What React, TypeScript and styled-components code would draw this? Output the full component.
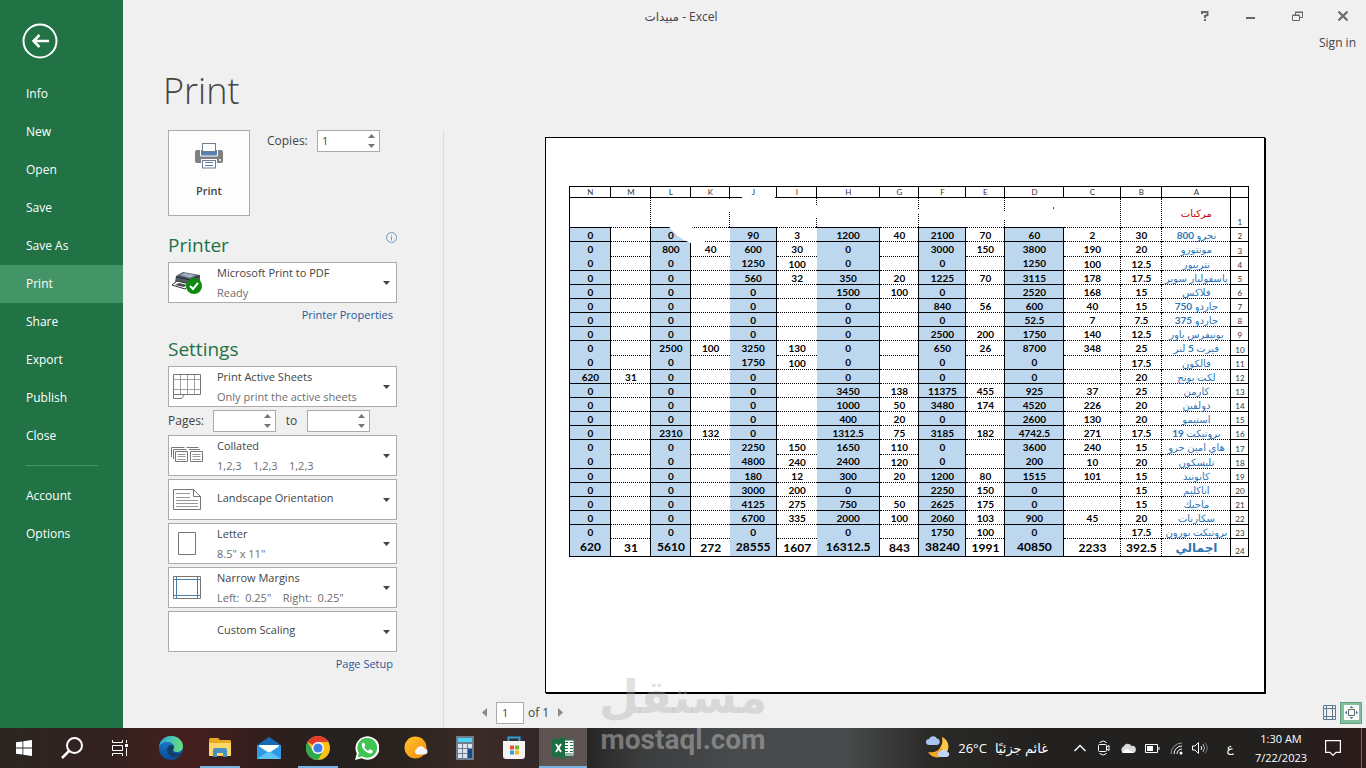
import React from "react";
import styled, { createGlobalStyle, css } from "styled-components";

const GlobalStyle = createGlobalStyle`
  *, *::before, *::after { box-sizing: border-box; }
  body {
    margin: 0;
    background: #f0f0f0;
    color: #444;
    font-family: "Open Sans", "DejaVu Sans", sans-serif;
    font-size: 11px;
    line-height: 16px;
  }
  button, input, select { font: inherit; color: inherit; margin: 0; }
  button { padding: 0; border: 0; background: none; }
  svg { display: block; }
`;

/* ---------- frame ---------- */

const Shell = styled.div`
  display: grid;
  grid-template-columns: 123px minmax(0, 1fr);
  grid-template-rows: 1fr 40px;
  min-height: 100vh;
  position: relative;
`;

const Sidebar = styled.nav`
  background: #217346;
  color: #fff;
  font-size: 12px;
  display: flex;
  flex-direction: column;
`;

const BackButton = styled.button`
  align-self: flex-start;
  margin: 23px 0 16px 22px;
`;

const NavItem = styled.a<{ $active?: boolean }>`
  display: flex;
  align-items: center;
  height: 38px;
  padding-left: 26px;
  color: #fff;
  text-decoration: none;
  background: ${(p) => (p.$active ? "#439467" : "transparent")};
`;

const NavRule = styled.hr`
  width: 72px;
  margin: 10px 26px 11px;
  border: 0;
  border-top: 1px solid #439467;
`;

const Main = styled.main`
  display: flex;
  flex-direction: column;
`;

const TitleBar = styled.header`
  display: flex;
  height: 32px;
  padding-left: 57px;
`;

const WindowTitle = styled.div`
  flex: 1;
  text-align: center;
  font-size: 12px;
  line-height: 34px;
`;

const WindowControls = styled.div`
  display: flex;
  width: 184px;
`;

const ControlButton = styled.button`
  flex: 1;
  display: grid;
  place-items: center;
`;

const SignIn = styled.a`
  align-self: flex-end;
  margin: 3px 10px 0 0;
  color: #444;
  font-size: 12px;
  text-decoration: none;
`;

const PageTitle = styled.h1`
  margin: 15px 0 15px 40px;
  font-size: 36px;
  line-height: 49px;
  font-weight: 300;
`;

const Backstage = styled.div`
  display: flex;
  flex: 1;
`;

/* ---------- settings column ---------- */

const Settings = styled.form`
  width: 321px;
  padding: 0 46px 0 45px;
  border-right: 1px solid #dcdcdc;
  display: flex;
  flex-direction: column;
`;

const TopRow = styled.div`
  display: flex;
  align-items: flex-start;
  margin-bottom: 3px;
`;

const PrintButton = styled.button`
  width: 82px;
  height: 86px;
  margin-right: 17px;
  border: 1px solid #ababab;
  background: #fdfdfd;
  display: flex;
  flex-direction: column;
  align-items: center;
  justify-content: space-between;
  padding: 12px 0 16px;
  font-weight: 600;
`;

const FieldLabel = styled.label<{ $width: number; $centered?: boolean }>`
  width: ${(p) => p.$width}px;
  font-size: 12px;
  line-height: 22px;
  text-align: ${(p) => (p.$centered ? "center" : "left")};
`;

const SpinBox = styled.span`
  display: flex;
  width: 63px;
  height: 22px;
  border: 1px solid #ababab;
  background: #fff;
`;

const SpinInput = styled.input`
  flex: 1;
  min-width: 0;
  padding: 0 0 0 4px;
  border: 0;
  background: none;
`;

const SpinArrows = styled.span`
  display: flex;
  flex-direction: column;
  width: 16px;
`;

const SpinArrow = styled.button`
  flex: 1;
  display: grid;
  place-items: center;
`;

const SectionHead = styled.div`
  display: flex;
  justify-content: space-between;
  margin-top: 13px;
`;

const SectionTitle = styled.h2`
  margin: 0;
  font-size: 19px;
  line-height: 26px;
  font-weight: 400;
  color: #217346;
`;

const SectionBody = styled.div`
  display: flex;
  flex-direction: column;
  gap: 3px;
  margin-top: 4px;
`;

const OptionBox = styled.div`
  display: grid;
  height: 41px;
  position: relative;
  border: 1px solid #ababab;
  background: #fff;
`;

const OptionSelect = styled.select<{ $single: boolean }>`
  grid-area: 1 / 1;
  appearance: none;
  width: 100%;
  height: 39px;
  padding: ${(p) => (p.$single ? "0 28px 3px 48px" : "0 28px 20px 48px")};
  border: 0;
  background: none;
`;

const OptionCaption = styled.span`
  grid-area: 1 / 1;
  align-self: end;
  padding: 0 28px 1px 48px;
  color: #6d6d6d;
  white-space: pre;
  pointer-events: none;
`;

const OptionIcon = styled.span`
  grid-area: 1 / 1;
  align-self: center;
  width: 36px;
  display: grid;
  place-items: center;
  pointer-events: none;
`;

const OptionArrow = styled.span`
  grid-area: 1 / 1;
  place-self: center end;
  margin-right: 6px;
  pointer-events: none;
`;

const PagesRow = styled.div`
  display: flex;
`;

const SettingsLink = styled.a`
  align-self: flex-end;
  margin: 4px 4px 0 0;
  color: #2b579a;
  text-decoration: none;
`;

/* ---------- preview ---------- */

const Preview = styled.section`
  flex: 1;
  min-width: 0;
  display: flex;
  flex-direction: column;
  padding-top: 7px;
`;

const Paper = styled.div`
  width: 78%;
  aspect-ratio: 718 / 555;
  align-self: center;
  border: 1px solid #000;
  box-shadow: 1px 1px 0 #000;
  background: #fff;
  padding: 48px 15px 0 23px;
`;

const SheetFrame = styled.div`
  position: relative;
`;

const Sheet = styled.table`
  width: 100%;
  table-layout: fixed;
  border-collapse: collapse;
  border: 1px solid #000;
  font-family: Lato, "DejaVu Sans", sans-serif;
  font-size: 10px;
  font-weight: 700;
  line-height: 12px;
  color: #000;
  text-align: center;
`;

const SheetRow = styled.tr<{ $height: number; $total?: boolean }>`
  height: ${(p) => p.$height}px;
  font-size: ${(p) => (p.$total ? 12 : 10)}px;
`;

const headStyle = css`
  padding: 0;
  border: 1px solid #000;
  font-size: 8px;
  font-weight: 400;
  line-height: 10px;
  color: #333;
`;

const ColumnHead = styled.th`
  ${headStyle}
`;

const RowHead = styled.th`
  ${headStyle}
  vertical-align: bottom;
`;

type CellKind = "plain" | "dotted" | "blue" | "blueBoxed";

const Cell = styled.td<{ $kind: CellKind; $open: boolean }>`
  padding: 0;
  white-space: nowrap;
  border-top: 1px dotted #000;
  ${(p) => p.$kind === "dotted" && css`border-left: 1px dotted #000;`}
  ${(p) =>
    (p.$kind === "blue" || p.$kind === "blueBoxed") &&
    css`
      background: #bdd7ee;
      border-top: ${p.$open ? "0" : "1px solid #000"};
      border-right: 1px solid #000;
    `}
  ${(p) => p.$kind === "blueBoxed" && css`border-left: 1px solid #000;`}
`;

type NameTone = "heading" | "item" | "total";

const NameCell = styled.td<{ $tone: NameTone }>`
  padding: 0;
  border-top: 1px dotted #000;
  border-left: 1px dotted #000;
  color: ${(p) => (p.$tone === "heading" ? "#c00000" : "#2e75b6")};
  font-size: ${(p) => (p.$tone === "total" ? 12 : 10)}px;
  font-weight: ${(p) => (p.$tone === "total" ? 700 : 400)};
  white-space: nowrap;
`;

const GroupCell = styled.td`
  padding: 0;
  border-left: 1px dotted #000;
`;

const Smudges = styled.svg`
  position: absolute;
  inset: 0;
  width: 100%;
  height: 100%;
  pointer-events: none;
`;

const PreviewBar = styled.div`
  display: flex;
  align-items: center;
  gap: 4px;
  padding: 9px 4px 4px 36px;
`;

const PageInput = styled.input`
  width: 28px;
  height: 22px;
  margin-left: 4px;
  padding: 0 0 0 5px;
  border: 1px solid #ababab;
  background: #fff;
`;

const PageCount = styled.span`
  width: 24px;
  font-size: 12px;
`;

const ViewButtons = styled.div`
  display: flex;
`;

const IconButton = styled.button<{ $on?: boolean }>`
  display: grid;
  place-items: center;
  width: 22px;
  height: 22px;
  border: 1px solid ${(p) => (p.$on ? "#5fa17d" : "transparent")};
  background: ${(p) => (p.$on ? "#86bfa0" : "transparent")};
`;

const PagerArrow = styled.button`
  width: 8px;
  height: 14px;
  display: grid;
  place-items: center;
`;

const Spacer = styled.span`
  flex: 1;
`;

/* ---------- watermark ---------- */

const Watermark = styled.div`
  position: absolute;
  left: 50%;
  bottom: 12px;
  transform: translateX(-50%);
  z-index: 2;
  display: flex;
  flex-direction: column;
  align-items: center;
  pointer-events: none;
  font-weight: 700;
`;

const WatermarkName = styled.span`
  font-family: "DejaVu Sans", sans-serif;
  font-size: 46px;
  line-height: 54px;
  color: rgba(170, 170, 170, 0.35);
`;

const WatermarkSite = styled.span`
  font-family: Roboto, sans-serif;
  font-size: 28px;
  line-height: 32px;
  color: rgba(190, 190, 190, 0.5);
`;

/* ---------- taskbar ---------- */

const Taskbar = styled.footer`
  grid-column: 1 / -1;
  display: flex;
  color: #fff;
  background: linear-gradient(
    90deg,
    #2b2622 0%,
    #33211f 8%,
    #461f1e 14%,
    #2e1f1d 20%,
    #24211e 24%,
    #2a221f 29%,
    #3c2b26 35%,
    #33282a 39%,
    #262626 43%,
    #3c3d3e 47%,
    #484a4b 54%,
    #484a4b 62%,
    #2a2a29 68%,
    #23211f 76%,
    #23211f 94%,
    #2e1a1a 100%
  );
`;

const TaskGroup = styled.div`
  display: flex;
`;

const AppGroup = styled(TaskGroup)`
  gap: 1px;
  margin-left: 3px;
`;

const TaskButton = styled.button<{ $open?: boolean; $active?: boolean }>`
  width: 48px;
  height: 40px;
  display: grid;
  place-items: center;
  background: ${(p) => (p.$active ? "#5e5552" : "none")};
  ${(p) =>
    (p.$open || p.$active) &&
    css`
      background-image: linear-gradient(#76b2e3, #76b2e3);
      background-size: ${p.$active ? "48px" : "40px"} 2px;
      background-position: center bottom;
      background-repeat: no-repeat;
    `}
`;

const Weather = styled.button`
  display: flex;
  align-items: center;
  gap: 8px;
  margin-right: 20px;
  font-size: 13px;
`;

const TrayButton = styled.button`
  width: 24px;
  display: grid;
  place-items: center;
`;

const Language = styled.button`
  width: 36px;
  font-size: 12px;
`;

const Clock = styled.button`
  width: 66px;
  line-height: 19px;
  text-align: center;
`;

const Notifications = styled.button`
  width: 38px;
  display: grid;
  place-items: center;
`;

const ShowDesktop = styled.button`
  width: 5px;
  margin-left: 9px;
  border-left: 1px solid #6d6765;
`;

const TrayEnd = styled.div`
  display: flex;
`;

/* ---------- data ---------- */

const navMain = ["Info", "New", "Open", "Save", "Save As", "Print", "Share", "Export", "Publish", "Close"];
const navExtra = ["Account", "Options"];

const columnWidths = [18, 69, 41, 57, 59, 39, 47, 39, 63, 40, 47, 39, 40, 40, 41];
const columnNames = ["A", "B", "C", "D", "E", "F", "G", "H", "I", "J", "K", "L", "M", "N"];
const columnKinds: CellKind[] = [
  "dotted", "plain", "blueBoxed", "plain", "blueBoxed", "plain", "blue",
  "plain", "blue", "plain", "blueBoxed", "plain", "blueBoxed",
];

const rows: string[][] = [
  "نجرو 800|30|2|60|70|2100|40|1200|3|90||0||0",
  "مونتورو|20|190|3800|150|3000||0|30|600|40|800||0",
  "نتريبور|12.5|100|1250||0||0|100|1250||0||0",
  "باسفوليار سوبر|17.5|178|3115|70|1225|20|350|32|560||0||0",
  "فلاكس|15|168|2520||0|100|1500||0||0||0",
  "جاردو 750|15|40|600|56|840||0||0||0||0",
  "جاردو 375|7.5|7|52.5||0||0||0||0||0",
  "يونيفرس باور|12.5|140|1750|200|2500||0||0||0||0",
  "فيرت 5 لتر|25|348|8700|26|650||0|130|3250|100|2500||0",
  "فالكون|17.5||0||0||0|100|1750||0||0",
  "لكت يونج|20||0||0||0||0||0|31|620",
  "كارمن|25|37|925|455|11375|138|3450||0||0||0",
  "دولفين|20|226|4520|174|3480|50|1000||0||0||0",
  "استيمو|20|130|2600||0|20|400||0||0||0",
  "بروتيكت 19|17.5|271|4742.5|182|3185|75|1312.5||0|132|2310||0",
  "هاي امين جرو|15|240|3600||0|110|1650|150|2250||0||0",
  "تليسكون|20|10|200||0|120|2400|240|4800||0||0",
  "كانونيد|15|101|1515|80|1200|20|300|12|180||0||0",
  "اتاكليم|15||0|150|2250||0|200|3000||0||0",
  "ماجيك|15||0|175|2625|50|750|275|4125||0||0",
  "سكارنات|20|45|900|103|2060|100|2000|335|6700||0||0",
  "بروتيكت بورون|17.5||0|100|1750||0||0||0||0",
  "اجمالي|392.5|2233|40850|1991|38240|843|16312.5|1607|28555|272|5610|31|620",
].map((line) => line.split("|"));

const openRows = [4, 11, 18, 24];
const tallRows = [3, 10, 17];

/* ---------- small drawings ---------- */

const Triangle = ({ d, w, h, fill = "#777" }: { d: string; w: number; h: number; fill?: string }) => (
  <svg width={w} height={h} viewBox={`0 0 ${w} ${h}`}><path d={d} fill={fill} /></svg>
);

const PrinterIcon = () => (
  <svg width="28" height="26" viewBox="0 0 28 26">
    <rect x="0" y="7" width="28" height="13" rx="2" fill="#7f8080" />
    <rect x="6" y="8" width="16" height="5" fill="#5a7fb0" />
    <rect x="7.500" y=".5" width="13" height="8" fill="#fff" stroke="#6c7f96" />
    <path d="M5.500 7v6h17V7" fill="none" stroke="#fff" />
    <rect x="6" y="16" width="16" height="10" fill="#fff" />
    <rect x="7.500" y="17.500" width="13" height="7.500" fill="#fff" stroke="#6c7f96" />
    <path d="M10 19.500h8M10 22.500h8" stroke="#5a7fb0" />
    <circle cx="25" cy="17" r="1" fill="#fff" />
  </svg>
);

const DeviceIcon = () => (
  <svg width="32" height="24" viewBox="0 0 32 24">
    <path d="M5 5 12 1l17 3v9l-9 3L4 11Z" fill="#565c66" />
    <path d="m9 4 4-2 12 2-6 3Z" fill="#9db0c6" />
    <path d="M5 6 20 9l9-4" fill="none" stroke="#23262c" />
    <path d="m1 14 5-4 13 3-5 5Z" fill="#fff" stroke="#333" />
    <path d="m4 14 4-2 8 2-3 2Z" fill="#4a4d52" />
    <circle cx="23" cy="15" r="8" fill="#0d8a0d" />
    <path d="m19 15 3 3 5-6" fill="none" stroke="#fff" strokeWidth="2" />
  </svg>
);

const SheetsIcon = () => (
  <svg width="30" height="26" viewBox="0 0 30 26" fill="none" stroke="#777">
    <path d="M8.500.5v20M15.500.5v20M22.500.5v20M1.500 5.500h27M1.500 15.500h27" stroke="#a0a0a0" />
    <path d="M1.500.5h27v20h-16l-3 4h-8zM1.500 20.500h11" />
  </svg>
);

const CollatedIcon = () => (
  <svg width="34" height="18" viewBox="0 0 34 18" fill="none" stroke="#777">
    <path d="M1.500 10V.5h13M3.500 12V2.500h13M16.500.5h12M19 2.500h11M5.500 4.500h12v10h-12zM20.500 4.500h12v10h-12z" />
    <path d="M7.500 7.500h8M7.500 9.500h8M7.500 12.500h8M22.500 7.500h8M22.500 9.500h8M22.500 12.500h8" stroke="#999" />
  </svg>
);

const LandscapeIcon = () => (
  <svg width="30" height="22" viewBox="0 0 30 22" fill="none" stroke="#777">
    <path d="M1.500.5h20l7 7v13h-27zM21.500.5v7h7" />
    <path d="M4 4.500h14M4 8.500h14M4 11.500h22M4 14.500h22M4 17.500h22" stroke="#999" />
  </svg>
);

const LetterIcon = () => (
  <svg width="18" height="23" viewBox="0 0 18 23"><path d="M.5.5h17v22H.5z" fill="#fff" stroke="#777" /></svg>
);

const MarginsIcon = () => (
  <svg width="30" height="24" viewBox="0 0 30 24" fill="none">
    <path d="M1.500.5h27v22h-27z" stroke="#777" />
    <path d="M4.500.5v22M25.500.5v22M1.500 3.500h27M1.500 19.500h27" stroke="#4a7fa8" />
  </svg>
);

const BackIcon = () => (
  <svg width="36" height="36" viewBox="0 0 36 36" fill="none" stroke="#fff">
    <circle cx="18" cy="18" r="16.500" strokeWidth="2" />
    <path d="M27 18H11M17.500 12 11.500 18l6 6" strokeWidth="2.500" />
  </svg>
);

const WindowsIcon = () => (
  <svg width="16" height="16" viewBox="0 0 16 16" fill="#fff">
    <path d="M0 2.300 6.500 1.400v6.200H0zM7.300 1.300 16 0v7.600H7.300zM0 8.400h6.500v6.200L0 13.700zM7.300 8.400H16V16l-8.700-1.300z" />
  </svg>
);

const SearchIcon = () => (
  <svg width="24" height="24" viewBox="0 0 24 24" fill="none" stroke="#fff">
    <circle cx="14.500" cy="9.500" r="7.500" strokeWidth="2" /><path d="m9 15-7 7" strokeWidth="2.500" />
  </svg>
);

const TaskViewIcon = () => (
  <svg width="18" height="16" viewBox="0 0 18 16" fill="none" stroke="#fff">
    <path d="M1.500 0v2.500h10V0M1.500 5.500h10v5h-10zM1.500 16v-2.500h10V16M15.500 0v3M15.500 8v8" /><path d="M14 4h3v3h-3z" fill="#fff" stroke="none" />
  </svg>
);

const EdgeIcon = () => (
  <svg width="24" height="24" viewBox="0 0 24 24">
    <defs>
      <linearGradient id="edgeTop" x1="0" x2="1"><stop offset="0" stopColor="#2aa8e0" /><stop offset="1" stopColor="#6be07a" /></linearGradient>
      <linearGradient id="edgeLow" x1="0" y1="0" x2="0" y2="1"><stop offset="0" stopColor="#1b86d0" /><stop offset="1" stopColor="#0c4a96" /></linearGradient>
    </defs>
    <circle cx="12" cy="12" r="12" fill="url(#edgeLow)" />
    <path d="M0 11C1 4 6 0 12 0c7 0 12 5 12 10 0 4-3 6-6 6-3 0-4-1-4-2s1-1 1-3c0-3-3-5-7-5-4 0-7 2-8 5Z" fill="url(#edgeTop)" />
    <path d="M8 14c0-3 2-5 4-5 2 0 3 1 3 2.500 0 1-1 1.500-1 2.500 0 2 2 3.500 5 3.500 2 0 3-.5 4-1-1 3-4 5-7 5-5 0-8-4-8-7.500Z" fill="#123f6b" />
  </svg>
);

const FolderIcon = () => (
  <svg width="22" height="20" viewBox="0 0 22 20">
    <path d="M0 1.500 1 0h8l2 2h10l1 1v15H0z" fill="#e9a820" /><path d="M0 5h22v13H0z" fill="#fdd868" />
    <path d="M4 19v-7q0-2 2-2h10q2 0 2 2v7h-4v-4H8v4z" fill="#4790c4" />
  </svg>
);

const MailIcon = () => (
  <svg width="24" height="22" viewBox="0 0 24 22">
    <path d="M0 8 12 0l12 8v14H0z" fill="#1769b5" /><path d="M2 8h20v7H2z" fill="#f4f8fc" />
    <path d="m0 8 12 8L24 8v14H0z" fill="#2f9be4" /><path d="m0 22 12-8 12 8z" fill="#5ec3f5" />
    <path d="M2 8h20l-10 7z" fill="#fff" />
  </svg>
);

const ChromeIcon = () => (
  <svg width="24" height="24" viewBox="0 0 24 24">
    <circle cx="12" cy="12" r="12" fill="#fbc116" />
    <path d="M12 12 1.600 6A12 12 0 0 1 22.400 6H12z" fill="#e33b2e" />
    <path d="M1.600 6A12 12 0 0 0 12 24l5.200-9L12 12 6.800 15z" fill="#2da94f" />
    <circle cx="12" cy="12" r="6" fill="#fff" /><circle cx="12" cy="12" r="4.600" fill="#3f7ee8" />
  </svg>
);

const WhatsAppIcon = () => (
  <svg width="24" height="24" viewBox="0 0 24 24">
    <path d="M0 24 1.800 17.500A12 11.800 0 1 1 6.500 22.300Z" fill="#fff" />
    <path d="m2.700 21.400 1.200-4.300a9.900 9.900 0 1 1 3.300 3.200Z" fill="#3fc351" />
    <path d="M8.500 6.500c-.6 0-1.700.7-1.700 2.600 0 3.800 5 8.400 8.400 8.400 1.600 0 2.700-1.100 2.700-2.600 0-.4-2.700-1.700-3.100-1.600-.6.200-1 1.600-1.600 1.500-1.500-.4-3.500-2.300-4-3.700-.1-.5 1-.9 1-1.600 0-.4-.9-3-1.700-3Z" fill="#fff" />
  </svg>
);

const SunIcon = () => (
  <svg width="24" height="24" viewBox="0 0 24 24">
    <defs><linearGradient id="sun" x1="0" y1="0" x2="1" y2="1"><stop offset="0" stopColor="#ffc62b" /><stop offset="1" stopColor="#f28a0c" /></linearGradient></defs>
    <circle cx="11.500" cy="11.500" r="11" fill="url(#sun)" />
    <path d="M13.500 18.500a3 3 0 0 1-1-5.600 4.500 4.500 0 0 1 8-.4 3 3 0 0 1 0 6z" fill="#f3f5f8" />
  </svg>
);

const CalculatorIcon = () => (
  <svg width="18" height="24" viewBox="0 0 18 24">
    <rect width="18" height="24" rx="1" fill="#6f7f8f" /><rect x="2" y="2" width="14" height="4" fill="#4fd2f5" />
    <path d="M2 8h4v4H2zM7 8h4v4H7zM12 8h4v4h-4zM2 13h4v4H2zM7 13h4v4H7zM2 18h4v4H2zM7 18h4v4H7z" fill="#dde3e9" />
    <path d="M12 13h4v9h-4z" fill="#174a86" />
  </svg>
);

const StoreIcon = () => (
  <svg width="24" height="24" viewBox="0 0 24 24">
    <path d="M6.500 6V1.500h11V6" fill="none" stroke="#2f9fd8" strokeWidth="2" />
    <path d="M1 5h22v15q0 3-3 3H4q-3 0-3-3z" fill="#f5f3f2" />
    <path d="M8 9.500h4v4H8z" fill="#e8502c" /><path d="M13 9.500h4v4h-4z" fill="#7bb521" />
    <path d="M8 14.500h4v4H8z" fill="#2f9fd8" /><path d="M13 14.500h4v4h-4z" fill="#f4b61c" />
  </svg>
);

const ExcelIcon = () => (
  <svg width="22" height="22" viewBox="0 0 22 22">
    <path d="M11 3h11v16H11z" fill="#fff" stroke="#217346" />
    <path d="M13 5.500h3M18 5.500h3M13 8.500h3M18 8.500h3M13 11.500h3M18 11.500h3M13 14.500h3M18 14.500h3M13 17h8" stroke="#217346" />
    <path d="M0 2.500 13 0v22L0 19.500z" fill="#1d6f42" />
    <path d="m4 7 5 8M9 7l-5 8" stroke="#fff" strokeWidth="1.800" />
  </svg>
);

const MoonIcon = () => (
  <svg width="24" height="24" viewBox="0 0 24 24">
    <path d="M16 1c8 4 8 14 2 18-5 4-13 3-16-3 5 1 9 0 12-4s3-8 2-11Z" fill="#f5a623" />
    <path d="M16 1c8 4 8 13 3 17-1-4-2-6-5-6 3-4 3-8 2-11Z" fill="#fbc94a" />
    <path d="M3 9a3 3 0 0 1 0-6 4.500 4.500 0 0 1 8-.500A3.300 3.300 0 0 1 11 9z" fill="#a9c4ee" />
    <path d="M14 21a2.800 2.800 0 0 1 0-5.500 4 4 0 0 1 7 0 2.800 2.800 0 0 1 0 5.500z" fill="#c2d5f5" />
  </svg>
);

/* ---------- parts ---------- */

const Spinner = ({ id, value }: { id: string; value?: string }) => (
  <SpinBox>
    <SpinInput id={id} defaultValue={value} inputMode="numeric" />
    <SpinArrows>
      <SpinArrow type="button" aria-label="Increase"><Triangle w={7} h={4} d="M0 4 3.500 0 7 4z" /></SpinArrow>
      <SpinArrow type="button" aria-label="Decrease"><Triangle w={7} h={4} d="M0 0h7L3.500 4z" /></SpinArrow>
    </SpinArrows>
  </SpinBox>
);

const Option = ({ label, value, caption, icon }: { label: string; value: string; caption?: string; icon?: React.ReactNode }) => (
  <OptionBox>
    <OptionIcon>{icon}</OptionIcon>
    <OptionSelect aria-label={label} $single={!caption}>
      <option>{value}</option>
    </OptionSelect>
    {caption && <OptionCaption>{caption}</OptionCaption>}
    <OptionArrow><Triangle w={7} h={4} d="M0 0h7L3.500 4z" fill="#444" /></OptionArrow>
  </OptionBox>
);

/* Numbers inside a product name are set bolder than the name itself. */
const ProductName = ({ text }: { text: string }) => (
  <>
    {text.split(/(\d+)/).map((part, i) => (/\d/.test(part) ? <b key={i}>{part}</b> : part))}
  </>
);

const Spreadsheet = () => (
  <SheetFrame>
    <Sheet dir="rtl">
      <colgroup>
        {columnWidths.map((w, i) => <col key={i} width={w} />)}
      </colgroup>
      <thead>
        <SheetRow $height={11}>
          <ColumnHead />
          {columnNames.map((n) => <ColumnHead key={n} scope="col">{n}</ColumnHead>)}
        </SheetRow>
      </thead>
      <tbody>
        <SheetRow $height={30}>
          <RowHead scope="row">1</RowHead>
          <NameCell $tone="heading">مركبات</NameCell>
          <GroupCell />
          {[0, 1, 2, 3, 4].map((n) => <GroupCell key={n} colSpan={2} />)}
          <td colSpan={2} />
        </SheetRow>
        {rows.map((cells, r) => {
          const num = r + 2;
          const total = num === 24;
          return (
            <SheetRow key={num} $height={total ? 18 : tallRows.includes(num) ? 15 : 14} $total={total}>
              <RowHead scope="row">{num}</RowHead>
              <NameCell $tone={total ? "total" : "item"}><ProductName text={cells[0]} /></NameCell>
              {cells.slice(1).map((value, c) => (
                <Cell key={c} $kind={columnKinds[c]} $open={openRows.includes(num)}>{value}</Cell>
              ))}
            </SheetRow>
          );
        })}
      </tbody>
    </Sheet>
    <Smudges viewBox="0 0 679 370" preserveAspectRatio="none" aria-hidden="true">
      <path d="M173 9h33v4h-33zM158 14h6v12h-6zM245 19h6v12h-6zM347 24h6v4h-6zM432 25h8v8h-8z" fill="#fff" />
      <path d="M98 38q9 14 24 19h14V42h-12l-4-4z" fill="#fff" />
      <rect x="484" y="21" width="1" height="2" fill="#c00000" />
    </Smudges>
  </SheetFrame>
);

export default function App() {
  return (
    <Shell>
      <GlobalStyle />
      <Sidebar aria-label="File">
        <BackButton type="button" aria-label="Back"><BackIcon /></BackButton>
        {navMain.map((n) => (
          <NavItem key={n} href="#" $active={n === "Print"}>{n}</NavItem>
        ))}
        <NavRule />
        {navExtra.map((n) => <NavItem key={n} href="#">{n}</NavItem>)}
      </Sidebar>

      <Main>
        <TitleBar>
          <WindowTitle>مبيدات - Excel</WindowTitle>
          <WindowControls>
            <ControlButton type="button" aria-label="Help">
              <svg width="8" height="10" viewBox="0 0 8 10" fill="none" stroke="#666" strokeWidth="2"><path d="M1 3V1h5.500v3L4 5v2M4 8v2" /></svg>
            </ControlButton>
            <ControlButton type="button" aria-label="Minimize">
              <svg width="10" height="10" viewBox="0 0 10 10"><path d="M0 6h9v2H0z" fill="#666" /></svg>
            </ControlButton>
            <ControlButton type="button" aria-label="Restore">
              <svg width="11" height="11" viewBox="0 0 11 11" fill="none" stroke="#666"><path d="M.5 4.500h7v5h-7zM.5 4h7M3.500 4V1.500h7v5h-3M3 1h8" /></svg>
            </ControlButton>
            <ControlButton type="button" aria-label="Close">
              <svg width="10" height="10" viewBox="0 0 10 10" stroke="#666" strokeWidth="2"><path d="m.5.5 9 9M9.500.5l-9 9" /></svg>
            </ControlButton>
          </WindowControls>
        </TitleBar>
        <SignIn href="#">Sign in</SignIn>
        <PageTitle>Print</PageTitle>

        <Backstage>
          <Settings>
            <TopRow>
              <PrintButton type="button"><PrinterIcon />Print</PrintButton>
              <FieldLabel htmlFor="copies" $width={50}>Copies:</FieldLabel>
              <Spinner id="copies" value="1" />
            </TopRow>

            <SectionHead>
              <SectionTitle>Printer</SectionTitle>
              <svg width="11" height="11" viewBox="0 0 11 11" fill="none" stroke="#6f9ac0">
                <circle cx="5.500" cy="5.500" r="5" /><path d="M5.500 2.500v1M5.500 4.500v4" />
              </svg>
            </SectionHead>
            <SectionBody>
              <Option label="Printer" value="Microsoft Print to PDF" caption="Ready" icon={<DeviceIcon />} />
            </SectionBody>
            <SettingsLink href="#">Printer Properties</SettingsLink>

            <SectionHead>
              <SectionTitle>Settings</SectionTitle>
            </SectionHead>
            <SectionBody>
              <Option label="What to print" value="Print Active Sheets" caption="Only print the active sheets" icon={<SheetsIcon />} />
              <PagesRow>
                <FieldLabel htmlFor="from" $width={45}>Pages:</FieldLabel>
                <Spinner id="from" />
                <FieldLabel htmlFor="to" $width={31} $centered>to</FieldLabel>
                <Spinner id="to" />
              </PagesRow>
              <Option label="Collation" value="Collated" caption="1,2,3    1,2,3    1,2,3" icon={<CollatedIcon />} />
              <Option label="Orientation" value="Landscape Orientation" icon={<LandscapeIcon />} />
              <Option label="Paper size" value="Letter" caption={'8.5" x 11"'} icon={<LetterIcon />} />
              <Option label="Margins" value="Narrow Margins" caption={'Left:  0.25"    Right:  0.25"'} icon={<MarginsIcon />} />
              <Option label="Scaling" value="Custom Scaling" />
            </SectionBody>
            <SettingsLink href="#">Page Setup</SettingsLink>
          </Settings>

          <Preview aria-label="Print preview">
            <Paper><Spreadsheet /></Paper>
            <PreviewBar>
              <PagerArrow type="button" aria-label="Previous page"><Triangle w={5} h={9} d="M5 0v9L0 4.500z" fill="#8a8a8a" /></PagerArrow>
              <PageInput aria-label="Page" defaultValue="1" />
              <PageCount>of 1</PageCount>
              <PagerArrow type="button" aria-label="Next page"><Triangle w={5} h={9} d="M0 0v9l5-4.500z" fill="#8a8a8a" /></PagerArrow>
              <Spacer />
              <ViewButtons>
                <IconButton type="button" aria-label="Show margins">
                  <svg width="13" height="15" viewBox="0 0 13 15" fill="none" stroke="#5c7a92"><path d="M.5.5h12v14H.5zM3.500.5v14M9.500.5v14M.5 3.500h12M.5 11.500h12" /></svg>
                </IconButton>
                <IconButton type="button" $on aria-label="Zoom to page">
                  <svg width="15" height="15" viewBox="0 0 15 15" fill="none">
                    <path d="M.5.5h14v14H.5z" fill="#f4faf6" stroke="#fff" />
                    <path d="M4.500 4.500h6v6h-6z" stroke="#666" />
                    <path d="M5.500 3h4l-2-2zM5.500 12h4l-2 2zM3 5.500v4l-2-2zM12 5.500v4l2-2z" fill="#3f76a6" />
                  </svg>
                </IconButton>
              </ViewButtons>
            </PreviewBar>
          </Preview>
        </Backstage>
      </Main>

      <Taskbar>
        <TaskGroup>
          <TaskButton type="button" aria-label="Start"><WindowsIcon /></TaskButton>
          <TaskButton type="button" aria-label="Search"><SearchIcon /></TaskButton>
          <TaskButton type="button" aria-label="Task view"><TaskViewIcon /></TaskButton>
        </TaskGroup>
        <AppGroup>
          <TaskButton type="button" aria-label="Edge"><EdgeIcon /></TaskButton>
          <TaskButton type="button" aria-label="File Explorer" $open><FolderIcon /></TaskButton>
          <TaskButton type="button" aria-label="Mail"><MailIcon /></TaskButton>
          <TaskButton type="button" aria-label="Chrome" $open><ChromeIcon /></TaskButton>
          <TaskButton type="button" aria-label="WhatsApp"><WhatsAppIcon /></TaskButton>
          <TaskButton type="button" aria-label="Weather"><SunIcon /></TaskButton>
          <TaskButton type="button" aria-label="Calculator"><CalculatorIcon /></TaskButton>
          <TaskButton type="button" aria-label="Store"><StoreIcon /></TaskButton>
          <TaskButton type="button" aria-label="Excel" $active><ExcelIcon /></TaskButton>
        </AppGroup>
        <Spacer />
        <TrayEnd>
          <Weather type="button">
            <MoonIcon />
            <span>26°C</span>
            <span dir="rtl">غائم جزئيًا</span>
          </Weather>
          <TrayButton type="button" aria-label="Hidden icons">
            <svg width="12" height="8" viewBox="0 0 12 8" fill="none" stroke="#fff" strokeWidth="1.400"><path d="m.5 7 5.500-5.500L11.500 7" /></svg>
          </TrayButton>
          <TrayButton type="button" aria-label="Meet now">
            <svg width="12" height="16" viewBox="0 0 12 16" fill="none" stroke="#fff"><rect x=".5" y="4.500" width="8" height="7" rx="1" /><path d="m8.500 7 2.500-1.500v5L8.500 9M1.500 2.500q4-3 7 0M1.500 13.500q4 3 7 0" /></svg>
          </TrayButton>
          <TrayButton type="button" aria-label="OneDrive">
            <svg width="16" height="10" viewBox="0 0 16 10"><path d="M3.500 10a3.500 3.500 0 0 1 0-6.500 4.500 4.500 0 0 1 8-.5 3.500 3.500 0 0 1 1.500 7z" fill="#d9d9d9" /><path d="M2 9.500q4-5 7-3l5 3.500H3z" fill="#fff" /></svg>
          </TrayButton>
          <TrayButton type="button" aria-label="Battery">
            <svg width="15" height="9" viewBox="0 0 15 9" fill="none" stroke="#fff"><path d="M.5.5h12v8H.5zM14 3v3" /><path d="M2 2h6v5H2z" fill="#fff" stroke="none" /></svg>
          </TrayButton>
          <TrayButton type="button" aria-label="Network">
            <svg width="13" height="13" viewBox="0 0 13 13" fill="none" stroke="#fff"><path d="M1 12A11 11 0 0 1 12 1" stroke="#999" /><path d="M4 12a8 8 0 0 1 8-8M7 12a5 5 0 0 1 5-5" /><circle cx="11" cy="11" r="1.500" fill="#fff" stroke="none" /></svg>
          </TrayButton>
          <TrayButton type="button" aria-label="Volume">
            <svg width="17" height="14" viewBox="0 0 17 14" fill="none" stroke="#fff"><path d="M.5 5v4h2.500l3.500 3.500v-11L3 5zM9 5q1.500 2 0 4" /><path d="M11 3q3 4 0 8" stroke="#bbb" /><path d="M13 1.500q4.500 5.500 0 11" stroke="#777" /></svg>
          </TrayButton>
          <Language type="button">ع</Language>
          <Clock type="button">1:30 AM<br />7/22/2023</Clock>
          <Notifications type="button" aria-label="Notifications">
            <svg width="16" height="16" viewBox="0 0 16 16" fill="none" stroke="#fff" strokeWidth="1.200"><path d="M.6.6h14.800v11.800H11l-3 3-3-3H.6z" /></svg>
          </Notifications>
          <ShowDesktop type="button" aria-label="Show desktop" />
        </TrayEnd>
      </Taskbar>

      <Watermark>
        <WatermarkName lang="ar">مستقل</WatermarkName>
        <WatermarkSite>mostaql.com</WatermarkSite>
      </Watermark>
    </Shell>
  );
}
